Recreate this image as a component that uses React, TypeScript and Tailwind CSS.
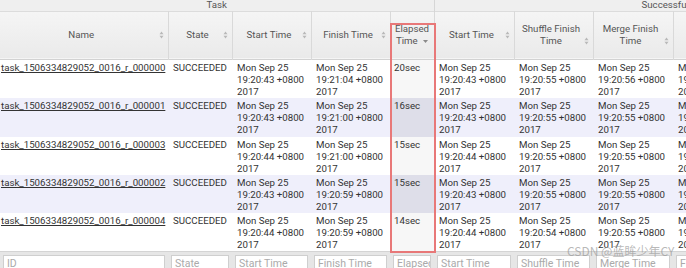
import React from "react";

type Row = {
  id: string;
  start: string;
  finish: string;
  elapsed: string;
  attStart: string;
  shuffle: string;
  merge: string;
  last: string;
};

const rows: Row[] = [
  { id: "task_1506334829052_0016_r_000000", start: "19:20:43", finish: "19:21:04", elapsed: "20sec", attStart: "19:20:43", shuffle: "19:20:55", merge: "19:20:56", last: "19:21:04" },
  { id: "task_1506334829052_0016_r_000001", start: "19:20:43", finish: "19:21:00", elapsed: "16sec", attStart: "19:20:43", shuffle: "19:20:55", merge: "19:20:55", last: "19:21:00" },
  { id: "task_1506334829052_0016_r_000003", start: "19:20:44", finish: "19:21:00", elapsed: "15sec", attStart: "19:20:44", shuffle: "19:20:55", merge: "19:20:55", last: "19:21:00" },
  { id: "task_1506334829052_0016_r_000002", start: "19:20:43", finish: "19:20:59", elapsed: "15sec", attStart: "19:20:43", shuffle: "19:20:55", merge: "19:20:55", last: "19:20:59" },
  { id: "task_1506334829052_0016_r_000004", start: "19:20:44", finish: "19:20:59", elapsed: "14sec", attStart: "19:20:44", shuffle: "19:20:54", merge: "19:20:55", last: "19:20:59" },
];

const rowHeights = ["h-[38px]", "h-[39px]", "h-[38px]", "h-[38px]", "h-[38px]"];

function SortIcon() {
  return (
    <svg width="5" height="8" viewBox="0 0 5 8" className="shrink-0 mb-[2px]">
      <path d="M0.5 3.2 L2.5 0.6 L4.5 3.2 Z" fill="#b8b8b8" />
      <path d="M0.5 4.8 L2.5 7.4 L4.5 4.8 Z" fill="#b8b8b8" />
    </svg>
  );
}

function Head({ children, last }: { children: React.ReactNode; last?: boolean }) {
  return (
    <th className={`border-r border-[#d9d9d9] px-[4px] align-middle font-normal ${last ? "border-r-0" : ""}`}>
      <div className="flex items-end">
        <span className="flex-1 text-center leading-[12px]">{children}</span>
        <SortIcon />
      </div>
    </th>
  );
}

function DateCell({ time, className = "" }: { time: string; className?: string }) {
  return (
    <td className={`pl-[5px] pt-[2px] align-top leading-[12px] ${className}`}>
      <div>Mon Sep 25</div>
      <div>{time} +0800</div>
      <div>2017</div>
    </td>
  );
}

function Filter({ label }: { label: string }) {
  return (
    <td className="px-[3px] pt-[3px] align-top">
      <div className="h-[18px] border border-[#cfcfcf] bg-white pl-[3px] text-[10.5px] leading-[16px] text-[#aaaaaa] whitespace-nowrap overflow-hidden">
        {label}
      </div>
    </td>
  );
}

export default function App() {
  return (
    <div className="relative w-[686px] h-[268px] overflow-hidden bg-white text-[9.7px] text-[#333] font-['Roboto','Noto_Sans_CJK_SC',sans-serif]">
      <table className="table-fixed border-collapse w-[753px]">
        <colgroup>
          <col className="w-[168px]" />
          <col className="w-[64px]" />
          <col className="w-[79px]" />
          <col className="w-[79px]" />
          <col className="w-[44px]" />
          <col className="w-[80px]" />
          <col className="w-[79px]" />
          <col className="w-[80px]" />
          <col className="w-[80px]" />
        </colgroup>
        <thead className="text-[#555]">
          {/* group header */}
          <tr className="h-[11px] bg-[#efefef] border-b border-[#dcdcdc]">
            <th colSpan={5} className="border-r border-[#d6d6d6] font-normal leading-[10px] text-center">
              Task
            </th>
            <th colSpan={4} className="font-normal leading-[10px] text-left pl-[207px] whitespace-nowrap">
              Successful Attempt
            </th>
          </tr>
          {/* column header */}
          <tr className="h-[48px] bg-gradient-to-b from-[#f5f5f5] to-[#eaeaea] border-b border-[#d2d2d2]">
            <Head>Name</Head>
            <Head>State</Head>
            <Head>Start Time</Head>
            <Head>Finish Time</Head>
            <th className="border-r border-[#d9d9d9] font-normal align-middle leading-[12px] text-center">
              Elapsed
              <br />
              Time{" "}
              <svg width="5" height="3" viewBox="0 0 5 3" className="inline-block ml-[3px] align-middle">
                <path d="M0 0 L5 0 L2.5 3 Z" fill="#8a8a8a" />
              </svg>
            </th>
            <Head>Start Time</Head>
            <Head>
              Shuffle Finish
              <br />
              Time
            </Head>
            <Head>
              Merge Finish
              <br />
              Time
            </Head>
            <Head last>
              Finish
              <br />
              Time
            </Head>
          </tr>
        </thead>
        <tbody>
          {rows.map((r, i) => {
            const even = i % 2 === 1;
            return (
              <tr key={r.id} className={`${rowHeights[i]} ${even ? "bg-[#efeffb]" : "bg-white"}`}>
                <td className="pl-[1px] pt-[2px] align-top leading-[12px] whitespace-nowrap">
                  <a className="underline underline-offset-[1px] text-[#333]">{r.id}</a>
                </td>
                <td className="pl-[5px] pt-[2px] align-top leading-[12px]">SUCCEEDED</td>
                <DateCell time={r.start} />
                <DateCell time={r.finish} />
                <td className={`pl-[4px] pt-[2px] align-top leading-[12px] ${even ? "bg-[#dedee9]" : "bg-[#f7f7f7]"}`}>
                  {r.elapsed}
                </td>
                <DateCell time={r.attStart} />
                <DateCell time={r.shuffle} />
                <DateCell time={r.merge} />
                <DateCell time={r.last} />
              </tr>
            );
          })}
        </tbody>
        <tfoot>
          <tr className="h-[20px] bg-[#e6e6e6] border-t border-[#d4d4d4]">
            <Filter label="ID" />
            <Filter label="State" />
            <Filter label="Start Time" />
            <Filter label="Finish Time" />
            <Filter label="Elapsed" />
            <Filter label="Start Time" />
            <Filter label="Shuffle Time" />
            <Filter label="Merge Time" />
            <Filter label="Finish Time" />
          </tr>
        </tfoot>
      </table>

      {/* highlight box around the Elapsed column */}
      <div className="pointer-events-none absolute left-[390px] top-[23px] w-[46px] h-[230px] border-2 border-[#e87878]" />

      {/* watermark */}
      <div className="pointer-events-none absolute left-[567px] top-[244px] text-[12px] leading-[14px] text-[#9a9a9a]/70 whitespace-nowrap font-['Noto_Sans_CJK_SC',sans-serif]">
        CSDN @蓝眸少年CY
      </div>
    </div>
  );
}
